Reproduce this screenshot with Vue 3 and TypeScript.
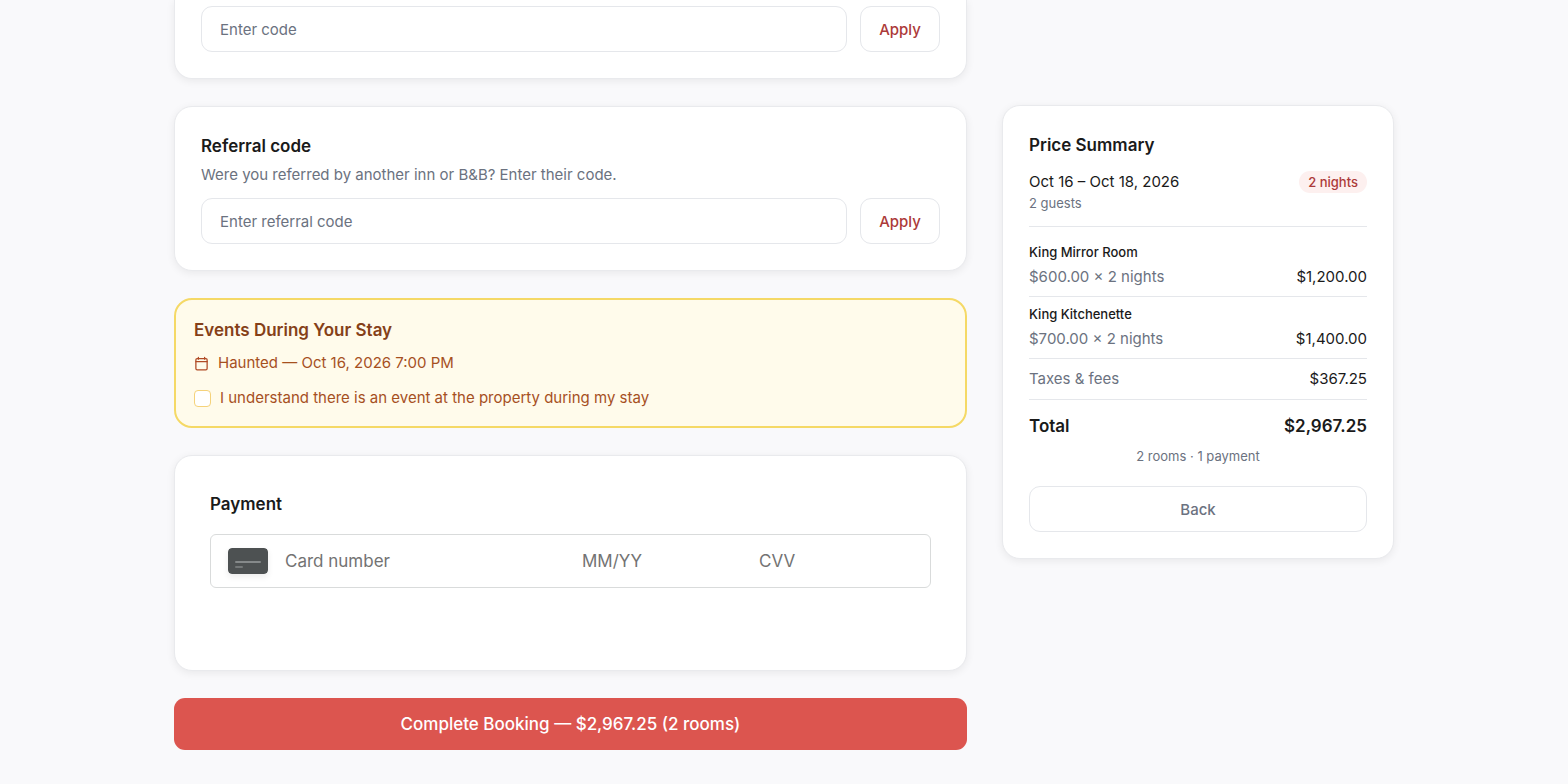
<script setup lang="ts">
import { ref } from 'vue'

interface RoomLine {
  name: string
  rate: string
  amount: string
}

const rooms: RoomLine[] = [
  { name: 'King Mirror Room', rate: '$600.00 × 2 nights', amount: '$1,200.00' },
  { name: 'King Kitchenette', rate: '$700.00 × 2 nights', amount: '$1,400.00' },
]

const promoCode = ref('')
const referralCode = ref('')
const acknowledged = ref(false)
const cardNumber = ref('')
const expiry = ref('')
const cvv = ref('')
</script>

<template>
  <main class="page">
    <form class="details" @submit.prevent>
      <section class="card card-continued">
        <div class="code-row">
          <input v-model="promoCode" class="code-input" type="text" placeholder="Enter code" aria-label="Promo code" />
          <button class="outline-button apply" type="button">Apply</button>
        </div>
      </section>

      <section class="card">
        <h2 class="title"><label for="referral">Referral code</label></h2>
        <p class="hint">Were you referred by another inn or B&amp;B? Enter their code.</p>
        <div class="code-row">
          <input id="referral" v-model="referralCode" class="code-input" type="text" placeholder="Enter referral code" />
          <button class="outline-button apply" type="button">Apply</button>
        </div>
      </section>

      <section class="events">
        <h2 class="title events-title">Events During Your Stay</h2>
        <p class="event">
          <svg class="calendar" viewBox="0 0 24 24" fill="none" stroke="currentColor" stroke-width="2" stroke-linecap="round" stroke-linejoin="round" aria-hidden="true">
            <path d="M7 2v3M17 2v3" />
            <rect x="3" y="4" width="18" height="18" rx="2" />
            <path d="M3 9h18" />
          </svg>
          <span>Haunted — Oct 16, 2026 7:00 PM</span>
        </p>
        <label class="acknowledge">
          <input v-model="acknowledged" class="checkbox" type="checkbox" />
          <span>I understand there is an event at the property during my stay</span>
        </label>
      </section>

      <section class="card payment">
        <h2 class="title">Payment</h2>
        <div class="card-field">
          <svg class="card-icon" viewBox="0 0 40 26" aria-hidden="true">
            <rect width="40" height="26" rx="4" fill="#4d5152" />
            <rect x="7" y="13" width="26" height="2" rx="1" fill="#85898a" />
            <rect x="7" y="18" width="8" height="2" rx="1" fill="#747879" />
          </svg>
          <input v-model="cardNumber" class="bare-input" type="text" placeholder="Card number" aria-label="Card number" />
          <input v-model="expiry" class="bare-input" type="text" placeholder="MM/YY" aria-label="Expiration date" />
          <input v-model="cvv" class="bare-input" type="text" placeholder="CVV" aria-label="CVV" />
        </div>
      </section>

      <button class="complete" type="submit">Complete Booking — $2,967.25 (2 rooms)</button>
    </form>

    <aside class="card summary">
      <h2 class="title">Price Summary</h2>
      <div class="stay">
        <div class="line">
          <span>Oct 16 – Oct 18, 2026</span>
          <span class="nights">2 nights</span>
        </div>
        <p class="small guests">2 guests</p>
      </div>

      <div v-for="room in rooms" :key="room.name" class="room">
        <h3 class="room-name">{{ room.name }}</h3>
        <div class="line">
          <span class="muted">{{ room.rate }}</span>
          <span>{{ room.amount }}</span>
        </div>
      </div>

      <div class="line taxes">
        <span class="muted">Taxes &amp; fees</span>
        <span>$367.25</span>
      </div>
      <div class="line total">
        <span>Total</span>
        <span>$2,967.25</span>
      </div>
      <p class="small count">2 rooms · 1 payment</p>
      <button class="outline-button back" type="button">Back</button>
    </aside>
  </main>
</template>

<style>
body {
  background: #f9f9fb;
}
</style>

<style scoped>
.page,
.page * {
  box-sizing: border-box;
}

.page {
  display: grid;
  grid-template-columns: minmax(0, 1fr) 392px;
  align-items: start;
  gap: 35px;
  max-width: 1220px;
  margin: 0 auto;
  padding-bottom: 35px;
  color: #1a1a1a;
  font-family: Inter, "Liberation Sans", sans-serif;
  font-size: 15px;
  line-height: 24px;
}

h2,
h3,
p {
  margin: 0;
}

input,
button {
  margin: 0;
  font-family: inherit;
}

.details {
  display: flex;
  flex-direction: column;
  gap: 27px;
}

.card {
  padding: 26px;
  border: 1px solid #e9eaed;
  border-radius: 18px;
  background: #fff;
  box-shadow: 0 2px 8px rgba(0, 0, 0, 0.07);
}

.card-continued {
  padding-top: 6px;
  border-top: 0;
  border-radius: 0 0 18px 18px;
}

.title {
  font-size: 17px;
  font-weight: 600;
  line-height: 26px;
}

.hint {
  margin: 4px 0 11px;
  color: #6b7280;
}

.code-row {
  display: flex;
  gap: 13px;
}

.code-input {
  flex: 1;
  min-width: 0;
  height: 46px;
  padding: 0 18px;
  border: 1px solid #e5e7eb;
  border-radius: 11px;
  background: #fff;
  color: #1a1a1a;
  font-size: 15px;
}

.code-input::placeholder {
  color: #6b7280;
  opacity: 1;
}

.outline-button {
  height: 46px;
  border: 1px solid #e5e7eb;
  border-radius: 11px;
  background: #fff;
  font-size: 15px;
  font-weight: 500;
  cursor: pointer;
}

.apply {
  width: 80px;
  padding: 0;
  color: #ac3a39;
}

.events {
  padding: 18px;
  border: 2px solid #f5d966;
  border-radius: 18px;
  background: #fffbeb;
  color: #a6501f;
}

.events-title {
  color: #854018;
  line-height: 24px;
}

.event,
.acknowledge {
  display: flex;
  align-items: center;
  gap: 9px;
}

.event {
  margin: 9px 0 13px;
}

.acknowledge {
  line-height: 20px;
}

.calendar {
  width: 15px;
  height: 15px;
  color: #b04a25;
}

.checkbox {
  appearance: none;
  width: 17px;
  height: 17px;
  border: 1px solid #f5d27a;
  border-radius: 4px;
  background: #fff;
}

.checkbox:checked {
  background: #a6501f;
}

.payment {
  padding: 35px 35px 82px;
}

.card-field {
  display: grid;
  grid-template-columns: 40px minmax(0, 1fr) 160px 154px;
  align-items: center;
  gap: 17px;
  height: 54px;
  margin-top: 17px;
  padding: 0 17px;
  border: 1px solid #d9dbdb;
  border-radius: 6px;
  background: #fff;
}

.card-icon {
  width: 40px;
  height: 26px;
  border-radius: 4px;
  box-shadow: 0 3px 6px rgba(0, 0, 0, 0.08);
}

.bare-input {
  width: 100%;
  padding: 0;
  border: 0;
  background: transparent;
  color: #1a1a1a;
  font-size: 17px;
  line-height: 26px;
}

.bare-input::placeholder {
  color: #737373;
  opacity: 1;
}

.complete {
  height: 52px;
  padding: 0 18px;
  border: 0;
  border-radius: 11px;
  background: #dc554f;
  color: #fff;
  font-size: 17px;
  font-weight: 500;
  cursor: pointer;
}

.summary {
  margin-top: 105px;
}

.line {
  display: flex;
  align-items: center;
  justify-content: space-between;
}

.stay {
  margin-top: 12px;
  padding-bottom: 13px;
  border-bottom: 1px solid #e5e7eb;
}

.nights {
  padding: 0 9px;
  border-radius: 11px;
  background: #fdf0ef;
  color: #ac3a39;
  font-size: 13px;
  font-weight: 500;
  line-height: 22px;
}

.small {
  color: #6b7280;
  font-size: 13px;
  line-height: 20px;
}

.guests {
  line-height: 19px;
}

.muted {
  color: #6b7280;
}

.room {
  padding: 7px 0;
  border-bottom: 1px solid #e5e7eb;
}

.stay + .room {
  margin-top: 8px;
}

.room-name {
  margin-bottom: 3px;
  font-size: 13px;
  font-weight: 500;
  line-height: 20px;
}

.taxes {
  padding: 8px 0;
  border-bottom: 1px solid #e5e7eb;
}

.total {
  padding-top: 13px;
  font-size: 17px;
  font-weight: 600;
  line-height: 26px;
}

.count {
  margin: 7px 0 20px;
  text-align: center;
}

.back {
  width: 100%;
  color: #6b7280;
}
</style>
